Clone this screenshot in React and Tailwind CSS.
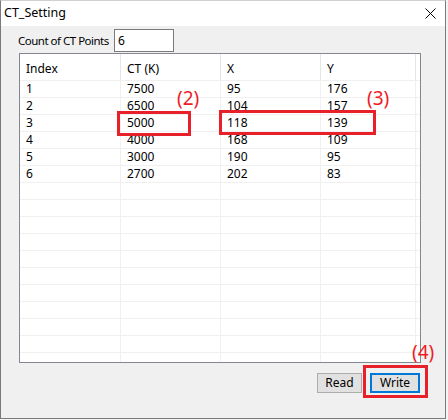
export default function App() {
  const rows = [
    ['1', '7500', '95', '176'],
    ['2', '6500', '104', '157'],
    ['3', '5000', '118', '139'],
    ['4', '4000', '168', '109'],
    ['5', '3000', '190', '95'],
    ['6', '2700', '202', '83'],
  ];
  const empty = Array.from({ length: 11 }, () => ['', '', '', '']);
  const all = [...rows, ...empty];

  return (
    <div className="w-[448px] h-[420px] bg-[#f3f3f3] relative overflow-hidden text-[12px] text-black font-['Noto_Sans',sans-serif]">
      {/* Dialog window */}
      <div className="w-[446px] h-[419px] border border-[#7a7a7a] border-t-[#d0d0d0] flex flex-col bg-[#f0f0f0]">
        {/* Title bar */}
        <div className="h-[25px] bg-white flex items-center justify-between pl-[3px] pr-[8px] shrink-0">
          <span className="text-[12.5px] leading-none">CT_Setting</span>
          <svg width="11" height="11" viewBox="0 0 11 11" className="mr-[1px]">
            <path d="M0.5 0.5 L10.5 10.5 M10.5 0.5 L0.5 10.5" stroke="#000" strokeWidth="1" />
          </svg>
        </div>

        {/* Count row */}
        <div className="flex items-center h-[23px] mt-[3px] pl-[17px]">
          <span className="w-[96px] shrink-0 whitespace-nowrap leading-none text-[11.5px] tracking-[-0.5px]">Count of CT Points</span>
          <div className="w-[60px] h-[23px] border border-[#7a7a7a] bg-white flex items-center pl-[3px]">6</div>
        </div>

        {/* List view */}
        <div className="ml-[18px] mt-[1px] w-[402px] h-[310px] border border-[#828790] bg-white overflow-hidden">
          <div className="flex h-[27px] border-b border-[#f0f0f0]">
            {['Index', 'CT (K)', 'X', 'Y'].map((h, i) => (
              <div
                key={h}
                className={
                  (i === 3 ? 'w-[95px]' : i === 0 ? 'w-[101px]' : 'w-[100px]') +
                  ' border-r border-[#e5e5e5] pl-[6px] pt-[9px] leading-none'
                }
              >
                {h}
              </div>
            ))}
          </div>
          {all.map((r, ri) => (
            <div key={ri} className="flex h-[17px] border-b border-[#f0f0f0]">
              {r.map((c, i) => (
                <div
                  key={i}
                  className={
                    (i === 3 ? 'w-[95px]' : i === 0 ? 'w-[101px]' : 'w-[100px]') +
                    ' border-r border-[#f0f0f0] pl-[6px] flex items-center leading-none'
                  }
                >
                  {c}
                </div>
              ))}
            </div>
          ))}
        </div>

        {/* Buttons */}
        <div className="flex justify-end gap-[8px] mt-[10px] pr-[25px]">
          <button className="w-[45px] h-[20px] border border-[#adadad] bg-[#e1e1e1] leading-none">Read</button>
          <button className="w-[50px] h-[20px] border-2 border-[#0078d7] bg-[#e1e1e1] leading-none">Write</button>
        </div>
      </div>

      {/* Annotations */}
      <div className="absolute left-[117px] top-[111px] w-[74px] h-[25px] border-[3px] border-[#e8202a]" />
      <div className="absolute left-[219px] top-[110px] w-[157px] h-[25px] border-[3px] border-[#e8202a]" />
      <div className="absolute left-[363px] top-[365px] w-[65px] h-[33px] border-[3px] border-[#e8202a]" />
      <span className="absolute left-[177px] top-[89px] text-[19px] leading-none text-[#ee1c25]">(2)</span>
      <span className="absolute left-[367px] top-[89px] text-[19px] leading-none text-[#ee1c25]">(3)</span>
      <span className="absolute left-[412px] top-[343px] text-[19px] leading-none text-[#ee1c25]">(4)</span>
    </div>
  );
}
